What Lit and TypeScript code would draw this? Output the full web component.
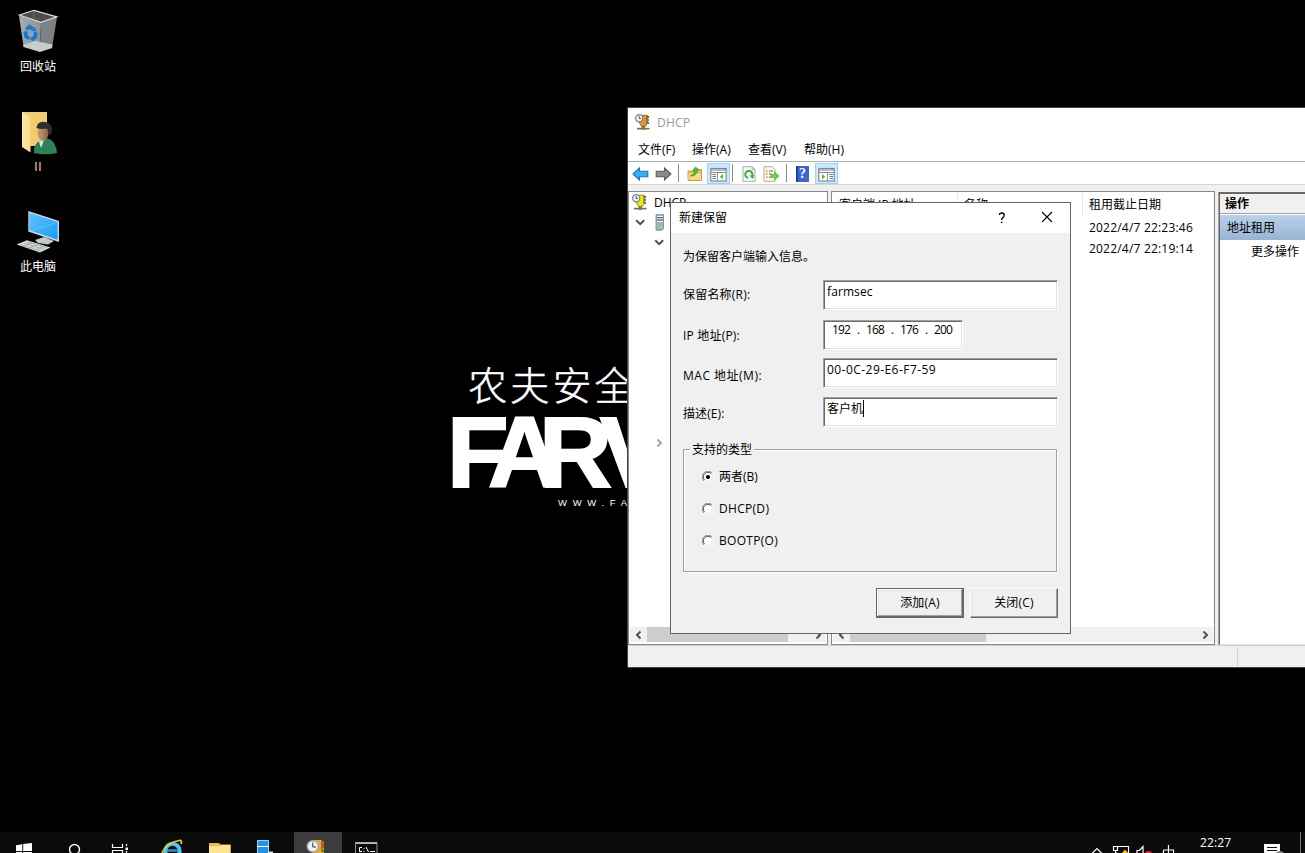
import { LitElement, html, css, svg } from "lit";
import { customElement } from "lit/decorators.js";

const icon = (x: number, y: number, w: number, h: number, body: unknown) =>
  html`<svg width=${w} height=${h} viewBox="${x} ${y} ${w} ${h}">${body}</svg>`;

const chevron = (dir: "l" | "r" | "d", color = "#505050") => {
  const d = { l: "M7.5 1.5L4 5L7.5 8.5", r: "M3.5 1.5L7 5L3.5 8.5", d: "M1.2 3.2L5.2 7.2L9.2 3.2" }[dir];
  return html`<svg width="11" height="10" viewBox="0 0 11 10"><path d=${d} fill="none" stroke=${color} stroke-width="2"/></svg>`;
};

const bin = icon(16, 6, 44, 48, svg`
  <defs><linearGradient id="b1" x1="0" x2="1"><stop offset="0" stop-color="#a9adb0"/><stop offset="1" stop-color="#8d9296"/></linearGradient></defs>
  <path d="M19 15.5L41 22.5L40 51.5L23.5 46.5Z" fill="url(#b1)"/>
  <path d="M41 22.5L57 17L52 48L40 51.5Z" fill="#7c8185"/>
  <path d="M23.3 45L35 41L52.5 44.5L52 48L40 52L23.5 47Z" fill="#c9cccd"/>
  <path d="M19.3 15L34 10.3L56.8 16.8L41 22.3Z" fill="#4c4c4c" stroke="#dcdcdc" stroke-width="1.2"/>
  <path d="M34 11V19.5" stroke="#777" stroke-width=".8"/>
  <g fill="none" stroke="#0c7bd8" stroke-width="3.6"><path d="M26.5 29.5L29.5 26.6L33 29"/><path d="M35.5 32L35.3 37L32 39.3"/><path d="M29.5 38.5L26 36.5L25.4 32.5"/></g>
  <path d="M31.5 30.7L36 31.5L35.7 27Z M33 36.5L29.8 39.3L33.8 41.3Z M23 34L25.5 30L28.5 34Z" fill="#0c7bd8"/>`);

const user = icon(16, 108, 44, 48, svg`
  <defs><linearGradient id="f1"><stop offset="0" stop-color="#ffe9a4"/><stop offset="1" stop-color="#fbdc8a"/></linearGradient>
  <linearGradient id="f2"><stop offset="0" stop-color="#c7a07a"/><stop offset="1" stop-color="#8a6242"/></linearGradient></defs>
  <path d="M22 112H47V146H30Z" fill="#f2cd70"/>
  <path d="M22 112L30.5 117.5V152.5L22 147Z" fill="url(#f1)"/>
  <path d="M34 154Q33 143.5 40 141L48 138.5Q56 141 57 153Q46 155.5 34 153Z" fill="#2f8057"/>
  <path d="M39 141.5L44 140L41 148Z" fill="#dfe7ea"/>
  <ellipse cx="43" cy="132.5" rx="5.6" ry="8" fill="url(#f2)"/>
  <path d="M36.5 128Q37 122 43 121.7Q51.5 122 52 129Q52 134 49.5 135.5Q49 129 46 128.5Q41 129.5 36.5 128Z" fill="#2f2e2e"/>`);

const pc = icon(16, 208, 44, 48, svg`
  <defs><linearGradient id="p1" x2="1" y2="1"><stop offset="0" stop-color="#5fc4ff"/><stop offset="1" stop-color="#159cf7"/></linearGradient></defs>
  <path d="M35 240L44 237L54 241L48 244.5L38 243Z" fill="#c4c8ca"/>
  <path d="M28.3 211L59 221V242L28.3 231.5Z" fill="#d5d8da"/>
  <path d="M29.3 212.8L57.6 222V239.8L29.3 230.3Z" fill="url(#p1)"/>
  <path d="M29.3 230.3L57.6 222V223L32 231.3Z" fill="#7dd1ff" opacity=".35"/>
  <path d="M16.5 244.5L27 240.3L50.5 247.5L40 252.5Z" fill="#d9dcdd"/>
  <path d="M20 244.5L41 251M23.5 243L44.5 249.5M27 241.6L47.5 248M23 246.5L32 242.5M29 248.5L38 244.3M35 250.4L44 246" stroke="#8f979b" stroke-width=".7"/>`);

const dhcp = (body: string, edge: string) => icon(0, 0, 16, 16, svg`
  <path d="M2 14.6H14.5" stroke="#6d6d4a" stroke-width="1.6" fill="none"/>
  <path d="M6.5 11.5H10V15.8H6.5Z" fill="#7d7b50"/>
  <path d="M5 1.3H12.3V9.5L10.5 12.3H6.5L4.5 9Z" fill=${body} stroke=${edge} stroke-width=".9"/>
  <path d="M11.8 1.5V9.5" stroke=${edge} stroke-width="1.2"/>
  <path d="M12.3 3H14" stroke="#d02d1c" stroke-width="2"/><path d="M12.3 6H14" stroke="#43a22a" stroke-width="2"/><path d="M12.3 9H14" stroke="#2a73c4" stroke-width="2"/>
  <circle cx="4.2" cy="4.2" r="3.6" fill="#f3f6f8" stroke="#76828b" stroke-width="1.2"/><path d="M4.2 2V4.5H6" stroke="#444" fill="none" stroke-width=".9"/>`);

const server = icon(0, 0, 10, 17, svg`
  <path d="M1 1L3 .2H8.5V15L7 16.3H1Z" fill="#a3b2ba" stroke="#72838c" stroke-width=".8"/>
  <path d="M2 2.5H8M2 5H8M2 7.5H8" stroke="#eff5f8"/><path d="M2 3.5H8M2 6H8" stroke="#586a73"/>
  <rect x="6" y="12.5" width="2" height="2" fill="#8df02c"/>`);

const arrow = (fill: string, edge: string, flip: boolean) => icon(0, 0, 17, 14, svg`
  <path transform=${flip ? "translate(17 0) scale(-1 1)" : ""} d="M1 7L7.5 1V4.2H15.8V9.8H7.5V13Z" fill=${fill} stroke=${edge} stroke-width="1.1"/>`);

const folderUp = icon(0, 0, 16, 16, svg`
  <path d="M1 5H6L7.5 3.5H14.5V14.5H1Z" fill="#e9bd5c" stroke="#c09035" stroke-width=".8"/>
  <path d="M1.5 7.5H14V14H1.5Z" fill="#f8d98b"/>
  <path d="M3 10Q7.2 9.5 7.2 4.8L5.5 5L8.5 1L12 4H10Q10.5 10 3 10Z" fill="#4cc52f" stroke="#27861a" stroke-width=".6"/>`);

const panel = (left: boolean) => icon(0, 0, 17, 16, svg`
  <rect x=".8" y="2.5" width="15.4" height="12.5" fill="#fff" stroke="#858b90" stroke-width="1.2"/>
  <path d="M1 4H16" stroke="#9da2a6" stroke-width="1.4"/><path d="M1 6.5H16" stroke="#858b90"/><path d=${left ? "M7.5 7V15" : "M9.5 7V15"} stroke="#8d9398"/>
  <path d=${left ? "M2.5 8.5H6M2.5 10.5H6M2.5 12.5H6" : "M11.5 8.5H15M11.5 10.5H15M11.5 12.5H15"} stroke="#6f777d"/>
  <path d=${left ? "M13 8V13.4L9.8 10.7Z" : "M4 8V13.4L7.2 10.7Z"} fill="#4abf35"/>
  <path d="M13.5 3H15.5" stroke="#3b82c4"/>`);

const refresh = icon(0, 0, 14, 16, svg`
  <path d="M1 .7H10L13 3.5V15.3H1Z" fill="#fbfbfb" stroke="#a9a9a9"/><path d="M10 .7V3.7H13" fill="none" stroke="#a9a9a9"/>
  <path d="M6 12A3.6 3.6 0 1 1 10.3 9.5" fill="none" stroke="#35b235" stroke-width="2"/><path d="M7.2 9.5L12.2 9L10.8 13Z" fill="#35b235"/>`);

const exportList = icon(0, 0, 17, 16, svg`
  <path d="M1 .7H9L12 3.5V15.3H1Z" fill="#fdf8dc" stroke="#b5ab8c"/>
  <path d="M3 5H4.5M3 8H4.5M3 11H4.5M6 5H10M6 8H9M6 11H9" stroke="#6b6b77"/>
  <path d="M8 8.5H11.5V5.8L16.2 10L11.5 14V11.5H8Z" fill="#6fd044" stroke="#58ad33" stroke-width=".6"/>`);

const radio = (on: boolean) => icon(0, 0, 12, 12, svg`
  <circle cx="6" cy="6" r="5" fill="#fff"/>
  <path d="M1.9 10A5.4 5.4 0 0 1 10 1.9" fill="none" stroke="#8f8f8f"/><path d="M2.7 9.2A4.4 4.4 0 0 1 9.2 2.7" fill="none" stroke="#555"/>
  <path d="M2.2 10A5.4 5.4 0 0 0 10 2.2" fill="none" stroke="#fff"/><path d="M2.9 9.3A4.4 4.4 0 0 0 9.3 2.9" fill="none" stroke="#dedede" stroke-width=".8"/>
  ${on ? svg`<circle cx="6" cy="6" r="2.1" fill="#000"/>` : ""}`);

@customElement("task-bar")
export class TaskBar extends LitElement {
  static styles = css`
    :host { display: flex; height: 21px; background: #0b0b0b; overflow: hidden; }
    .cell { width: 48px; height: 21px; flex: none; }
    .cell.active { background: #3c3c3c; }
    .cell.first { width: 54px; }
    .grow { flex: 1; }
    .clock { width: 42px; padding-top: 2px; box-sizing: border-box; color: #fff; font: 12px/17px "Open Sans", "Noto Sans", sans-serif; letter-spacing: .1px; }
    .tray { width: 120px; }
    .right { width: 63px; }
    svg { display: block; }
  `;
  render() {
    return html`
      <div class="cell">${icon(0, 832, 48, 21, svg`<g fill="#fff"><path d="M16 845.2L22.3 844.2V851H16ZM23.2 844.1L32 843V851H23.2Z"/><path d="M16 852H22.3V854H16ZM23.2 852H32V854H23.2Z"/></g>`)}</div>
      <div class="cell">${icon(48, 832, 48, 21, svg`<circle cx="74.5" cy="849.5" r="5" fill="none" stroke="#fff" stroke-width="1.4"/>`)}</div>
      <div class="cell">${icon(96, 832, 48, 21, svg`<path d="M112.5 844V847.5H122.5V844M112.5 853V850.5H122.5V853M126.5 844V846M126.5 851V853" fill="none" stroke="#fff" stroke-width="1.2"/><path d="M125.5 847.5H128V850H125.5Z" fill="#fff"/>`)}</div>
      <div class="cell">${icon(144, 832, 48, 21, svg`<circle cx="172.5" cy="851" r="7.2" fill="none" stroke="#50c4f2" stroke-width="4"/><path d="M167 850.5H178" stroke="#159bd7" stroke-width="2.5"/><path d="M162 853Q166 843 179 840.5Q182.5 840 181 844" fill="none" stroke="#f5c52a" stroke-width="1.7"/>`)}</div>
      <div class="cell">${icon(192, 832, 48, 21, svg`<path d="M209 843H219L220.5 844.5H230.5V854H209Z" fill="#e9b94b"/><path d="M209 846H220L221.5 845H230.5V854H209Z" fill="#ffe393"/>`)}</div>
      <div class="cell first">${icon(240, 832, 54, 21, svg`<path d="M257.5 840.5H268.5V854H257.5Z" fill="#2593e0" stroke="#8fd0fa"/><path d="M257 846.5H269" stroke="#fff" stroke-width="1"/><path d="M268 851.5H273V854H268Z" fill="#cbe5f5"/>`)}</div>
      <div class="cell active">${icon(294, 832, 48, 21, svg`<path d="M314 840H321L324 842.5V854H312Z" fill="#e9a93c"/><path d="M321 840.5L324 843V852H321Z" fill="#a76d16"/><path d="M322 844H324" stroke="#e4452c" stroke-width="2"/><path d="M322 849H324" stroke="#5ebd3a" stroke-width="2"/><circle cx="312.8" cy="846.3" r="5.6" fill="#eff3f5" stroke="#98a6ae" stroke-width="1.4"/><path d="M312.8 842.5V847H316" stroke="#333" fill="none"/>`)}</div>
      <div class="cell">${icon(342, 832, 48, 21, svg`<path d="M355.5 842.5H377V854H355.5Z" fill="#0b0b0b" stroke="#8f979b"/><path d="M355.5 843.2H377" stroke="#b5babd" stroke-width="1.6"/><path d="M362 847.5H359.5V851.5H362M364 848V849M364 851V852M366 847L368.5 852M370 851.5H375" stroke="#fff" fill="none"/>`)}</div>
      <div class="grow"></div>
      <div class="tray">${icon(1080, 832, 120, 21, svg`<g fill="none" stroke="#fff" stroke-width="1.2"><path d="M1092 853.5L1097 848.5L1102 853.5"/><path d="M1118 846.5H1128.5V854M1117 853H1115.5"/><path d="M1113.5 846.5H1117.5V850.5H1113.5ZM1115.5 850.5V854"/><path d="M1137 854V850.5H1139.5L1143 846.5V853"/><path d="M1163.5 850H1173.5V854M1163.5 850V854M1168.5 845V854"/></g><path d="M1122 853L1125 849.5L1128 853Z" fill="#ffc400"/><circle cx="1148.5" cy="855" r="4" fill="#e32a32"/>`)}</div>
      <div class="clock">22:27</div>
      <div class="right">${icon(1242, 832, 63, 21, svg`<path d="M1264 844H1280V854H1264Z" fill="#fff"/><path d="M1267 847.5H1277M1267 850.5H1277" stroke="#111" stroke-width="1.1"/><circle cx="1280" cy="856" r="5" fill="#888"/><path d="M1300.5 832V853" stroke="#777"/>`)}</div>`;
  }
}

@customElement("reserve-dialog")
export class ReserveDialog extends LitElement {
  static styles = css`
    :host { display: block; box-sizing: border-box; width: 401px; height: 432px; border: 1px solid #666; background: #f0f0f0; color: #000;
      font: 12px/18px "Open Sans", "Noto Sans CJK SC", sans-serif; white-space: nowrap; }
    svg { display: block; }
    .title { display: flex; align-items: center; height: 30px; background: #fff; padding-left: 8px; box-sizing: border-box; }
    .title span { flex: 1; }
    .q { width: 8px; margin-right: 35px; }
    .x { margin-right: 17px; padding-bottom: 2px; }
    .intro { height: 18px; margin: 15px 0 0 12px; }
    .row { display: flex; margin-left: 12px; height: 29px; }
    .row label { width: 140px; letter-spacing: .3px; }
    .r1 { margin-top: 14px; } .r2 { margin-top: 11px; } .r3 { margin-top: 9px; } .r4 { margin-top: 10px; }
    .r1 label { padding-top: 6px; letter-spacing: .2px; } .r2 label { padding-top: 7px; letter-spacing: .2px; } .r3 label { padding-top: 9px; letter-spacing: .5px; } .r4 label { padding-top: 8px; letter-spacing: .1px; }
    .input { box-sizing: border-box; width: 235px; height: 30px; background: #fff; padding: 1px 0 0 3px; border: 1px solid; border-color: #a0a0a0 #fff #fff #a0a0a0;
      box-shadow: inset 1px 1px #696969, inset -1px -1px #e3e3e3; line-height: 20px; display: flex; }
    .ip { width: 140px; padding: 0 0 0 8px; line-height: 18px; letter-spacing: -0.8px; }
    .ip span { width: 25px; } .ip i { width: 9px; font-style: normal; }
    .r1 .input { letter-spacing: .1px; }
    .r3 .input { letter-spacing: .45px; }
    .caret { width: 1px; height: 17px; background: #000; margin-top: 1px; }
    .group { box-sizing: border-box; width: 374px; height: 123px; margin: 23px 0 0 12px; border: 1px solid #a0a0a0; box-shadow: inset 1px 1px #fff, 1px 1px #fff; padding: 0 18px; }
    .legend { width: 62px; height: 18px; margin: -9px 0 0 -12px; padding-left: 2px; background: #f0f0f0; }
    .opt { display: flex; align-items: center; gap: 5px; height: 18px; margin-top: 9px; letter-spacing: .3px; }
    .opt:nth-child(2) { letter-spacing: 0; }
    .opt + .opt { margin-top: 14px; }
    .buttons { display: flex; justify-content: flex-end; gap: 6px; margin: 16px 12px 0 0; }
    .btn { box-sizing: border-box; width: 88px; height: 30px; text-align: center; line-height: 28px; letter-spacing: .2px; border: 1px solid; border-color: #fff #696969 #696969 #fff; box-shadow: inset -1px -1px #a0a0a0, inset 1px 1px #e3e3e3; }
    .btn.default { border-color: #646464; box-shadow: inset -1px -1px #696969, inset 1px 1px #fff, inset -2px -2px #a0a0a0, inset 2px 2px #e3e3e3; }
  `;
  render() {
    return html`
      <div class="title"><span>新建保留</span>
        <div class="q">${icon(0, 0, 8, 12, svg`<path d="M1.4 3Q1.5 1 3.8 1Q6.2 1 6.2 3.2Q6.2 4.6 4.8 5.6Q3.7 6.4 3.7 8" fill="none" stroke="#000" stroke-width="1.3"/><circle cx="3.7" cy="10.3" r=".9" />`)}</div>
        <div class="x">${icon(0, 0, 12, 12, svg`<path d="M1 1L11 11M11 1L1 11" stroke="#000" stroke-width="1.1"/>`)}</div></div>
      <div class="intro">为保留客户端输入信息。</div>
      <div class="row r1"><label>保留名称(R):</label><div class="input">farmsec</div></div>
      <div class="row r2"><label>IP 地址(P):</label><div class="input ip"><span>192</span><i>.</i><span>168</span><i>.</i><span>176</span><i>.</i><span>200</span></div></div>
      <div class="row r3"><label>MAC 地址(M):</label><div class="input">00-0C-29-E6-F7-59</div></div>
      <div class="row r4"><label>描述(E):</label><div class="input">客户机<div class="caret"></div></div></div>
      <div class="group"><div class="legend">支持的类型</div>
        <div class="opt">${radio(true)}两者(B)</div><div class="opt">${radio(false)}DHCP(D)</div><div class="opt">${radio(false)}BOOTP(O)</div></div>
      <div class="buttons"><div class="btn default">添加(A)</div><div class="btn">关闭(C)</div></div>`;
  }
}

@customElement("dhcp-window")
export class DhcpWindow extends LitElement {
  static styles = css`
    :host { display: flex; flex-direction: column; box-sizing: border-box; width: 720px; height: 561px; border: 1px solid #444; background: #f0f0f0; color: #000;
      font: 12px/18px "Open Sans", "Noto Sans CJK SC", sans-serif; white-space: nowrap; }
    svg { display: block; flex: none; }
    .title { display: flex; align-items: center; gap: 6px; height: 28px; padding-left: 7px; background: #fff; color: #999; }
    .title span { padding-top: 2px; letter-spacing: .2px; }
    .menu { display: flex; height: 25px; box-sizing: border-box; padding: 5px 0 0 10px; background: #fff; }
    .menu span { width: 54px; } .menu span:nth-child(n+2) { width: 56px; }
    .tools { display: flex; align-items: center; height: 22px; background: #fff; border-top: 1px solid #aeb0b8; border-bottom: 1px solid #d7d7d7; padding: 0 0 0 4px; }
    .tools > svg { margin-top: 2px; }
    .sep { width: 1px; height: 18px; background: #8a8a8a; }
    .on { display: flex; align-items: center; justify-content: center; box-sizing: border-box; width: 23px; height: 21px; padding-top: 1px; background: #cce8ff; border: 1px solid #99d1ff; }
    .help { width: 13px; height: 16px; margin-top: 1px; background: linear-gradient(90deg, #203f9c 2px, #3d64cf 2px); color: #fff; text-align: center; font: bold 14px/16px "Liberation Serif", serif; }
    .main { display: flex; height: 454px; padding-top: 6px; box-sizing: content-box; }
    .pane { box-sizing: border-box; height: 454px; background: #fff; border: 1px solid #828790; display: flex; flex-direction: column; flex: none; }
    .tree { width: 200px; margin-right: 3px; }
    .list { width: 384px; margin-right: 3px; }
    .fill { flex: 1; }
    .root { display: flex; gap: 6px; padding: 2px 0 0 3px; height: 18px; }
    .node { display: flex; align-items: center; height: 20px; padding-left: 6px; gap: 9px; }
    .node.two { padding-left: 25px; }
    .node.far { margin-top: 181px; padding-left: 25px; }
    .bar { display: flex; align-items: center; height: 15px; margin: 0 1px 2px; background: #f0f0f0; padding: 0 2px 0 3px; }
    .thumb { height: 15px; background: #cdcdcd; margin-left: 3px; }
    .tree .thumb { width: 141px; } .list .thumb { width: 136px; }
    .heads { display: flex; height: 24px; padding-top: 1px; }
    .heads span { box-sizing: border-box; border-right: 1px solid #e5e5e5; padding: 3px 0 0 7px; height: 24px; }
    .heads .h1 { width: 126px; } .heads .h2 { width: 125px; padding-left: 6px; } .heads .h3 { flex: 1; border: 0; padding-left: 6px; }
    .item { height: 21px; padding-left: 257px; line-height: 21px; letter-spacing: .2px; }
    .actions { width: 200px; height: 453px; margin: 1px 0 0 1px; border: 0; border-left: 1px solid #696969; border-top: 2px solid #696969; border-bottom: 1px solid #e0e0e0; box-shadow: -1px 0 #a0a0a0; }
    .a1 { height: 19px; background: #f0f0f0; border-bottom: 1px solid #a0a0a0; font-weight: 700; padding-left: 5px; line-height: 19px; }
    .a2 { height: 25px; margin-top: 1px; line-height: 25px; padding-left: 7px; background: linear-gradient(#b9d1ea, #99b4d1); }
    .a3 { padding: 3px 0 0 31px; }
    .status { display: flex; flex: 1; border-top: 1px solid #d0d0d0; }
    .status div { width: 609px; border-right: 1px solid #d0d0d0; margin: 1px 0; }
    .g1 { width: 8px; } .g2 { width: 4px; } .g3 { width: 2px; } .g4 { width: 9px; } .g5 { width: 6px; } .g6 { width: 7px; } .g7 { width: 9px; }
  `;
  render() {
    return html`
      <div class="title">${dhcp("#e0982d", "#9c671c")}<span>DHCP</span></div>
      <div class="menu"><span>文件(F)</span><span>操作(A)</span><span>查看(V)</span><span>帮助(H)</span></div>
      <div class="tools">
        ${arrow("#3aaef2", "#1c75b5", false)}
        <div class="g5"></div>${arrow("#8b8b8b", "#5f5f5f", true)}
        <div class="g5"></div><div class="sep"></div>
        <div class="g1"></div>${folderUp}
        <div class="g2"></div><div class="on">${panel(true)}</div>
        <div class="g3"></div><div class="sep"></div>
        <div class="g4"></div>${refresh}
        <div class="g6"></div>${exportList}
        <div class="g5"></div><div class="sep"></div>
        <div class="g7"></div><div class="help">?</div>
        <div class="g5"></div><div class="on">${panel(false)}</div>
      </div>
      <div class="main">
        <div class="pane tree">
          <div class="root">${dhcp("#f3e80c", "#8f861c")}<span>DHCP</span></div>
          <div class="node">${chevron("d")}${server}</div>
          <div class="node two">${chevron("d")}</div>
          <div class="node far">${chevron("r", "#a6a6a6")}</div>
          <div class="fill"></div>
          <div class="bar">${chevron("l")}<div class="thumb"></div><div class="fill"></div>${chevron("r")}</div>
        </div>
        <div class="pane list">
          <div class="heads"><span class="h1">客户端 IP 地址</span><span class="h2">名称</span><span class="h3">租用截止日期</span></div>
          <div class="item">2022/4/7 22:23:46</div>
          <div class="item">2022/4/7 22:19:14</div>
          <div class="fill"></div>
          <div class="bar">${chevron("l")}<div class="thumb"></div><div class="fill"></div>${chevron("r")}</div>
        </div>
        <div class="pane actions"><div class="a1">操作</div><div class="a2">地址租用</div><div class="a3">更多操作</div></div>
      </div>
      <div class="status"><div></div></div>`;
  }
}

@customElement("app-root")
export class AppRoot extends LitElement {
  static styles = css`
    :host { display: flex; flex-direction: column; position: relative; width: 1305px; height: 853px; background: #000; overflow: hidden; font-family: "Open Sans", "Noto Sans CJK SC", sans-serif; }
    svg { display: block; }
    .icons { flex: 1; padding-top: 6px; width: 76px; }
    .shortcut { height: 100px; display: flex; flex-direction: column; align-items: center; color: #fff; font-size: 12px; line-height: 18px; gap: 4px; }
    .shortcut:nth-child(2) { padding-top: 2px; height: 98px; gap: 2px; }
    .shortcut:nth-child(3) { padding-top: 2px; gap: 2px; }
    .ll { color: #e39a4e; letter-spacing: .6px; text-shadow: .5px 0 #7f93b8; }
    .logo { position: absolute; left: 448px; top: 353px; width: 240px; color: #fff; white-space: nowrap; }
    .cn { font: 300 39px/60px "Noto Sans CJK SC", sans-serif; letter-spacing: 3.2px; margin-left: 20px; height: 60px; -webkit-text-stroke: .5px #fff; }
    .en { font: 700 101px "Liberation Sans", Arial, sans-serif; fill: #fff; stroke: #fff; stroke-width: 2px; }
    .www { font: 9.5px/12px "Liberation Sans", sans-serif; letter-spacing: 5.7px; margin: 9px 0 0 110px; }
    dhcp-window { position: absolute; left: 627px; top: 107px; }
    reserve-dialog { position: absolute; left: 670px; top: 202px; }
  `;
  render() {
    return html`
      <div class="icons">
        <div class="shortcut">${bin}<span>回收站</span></div>
        <div class="shortcut">${user}<span class="ll">II</span></div>
        <div class="shortcut">${pc}<span>此电脑</span></div>
      </div>
      <div class="logo">
        <div class="cn">农夫安全</div>
        <svg width="240" height="75" viewBox="448 413 240 75"><text class="en" x="447 488 539 600" y="487">FARV</text></svg>
        <div class="www">WWW.FA</div>
      </div>
      <dhcp-window></dhcp-window>
      <reserve-dialog></reserve-dialog>
      <task-bar></task-bar>`;
  }
}
